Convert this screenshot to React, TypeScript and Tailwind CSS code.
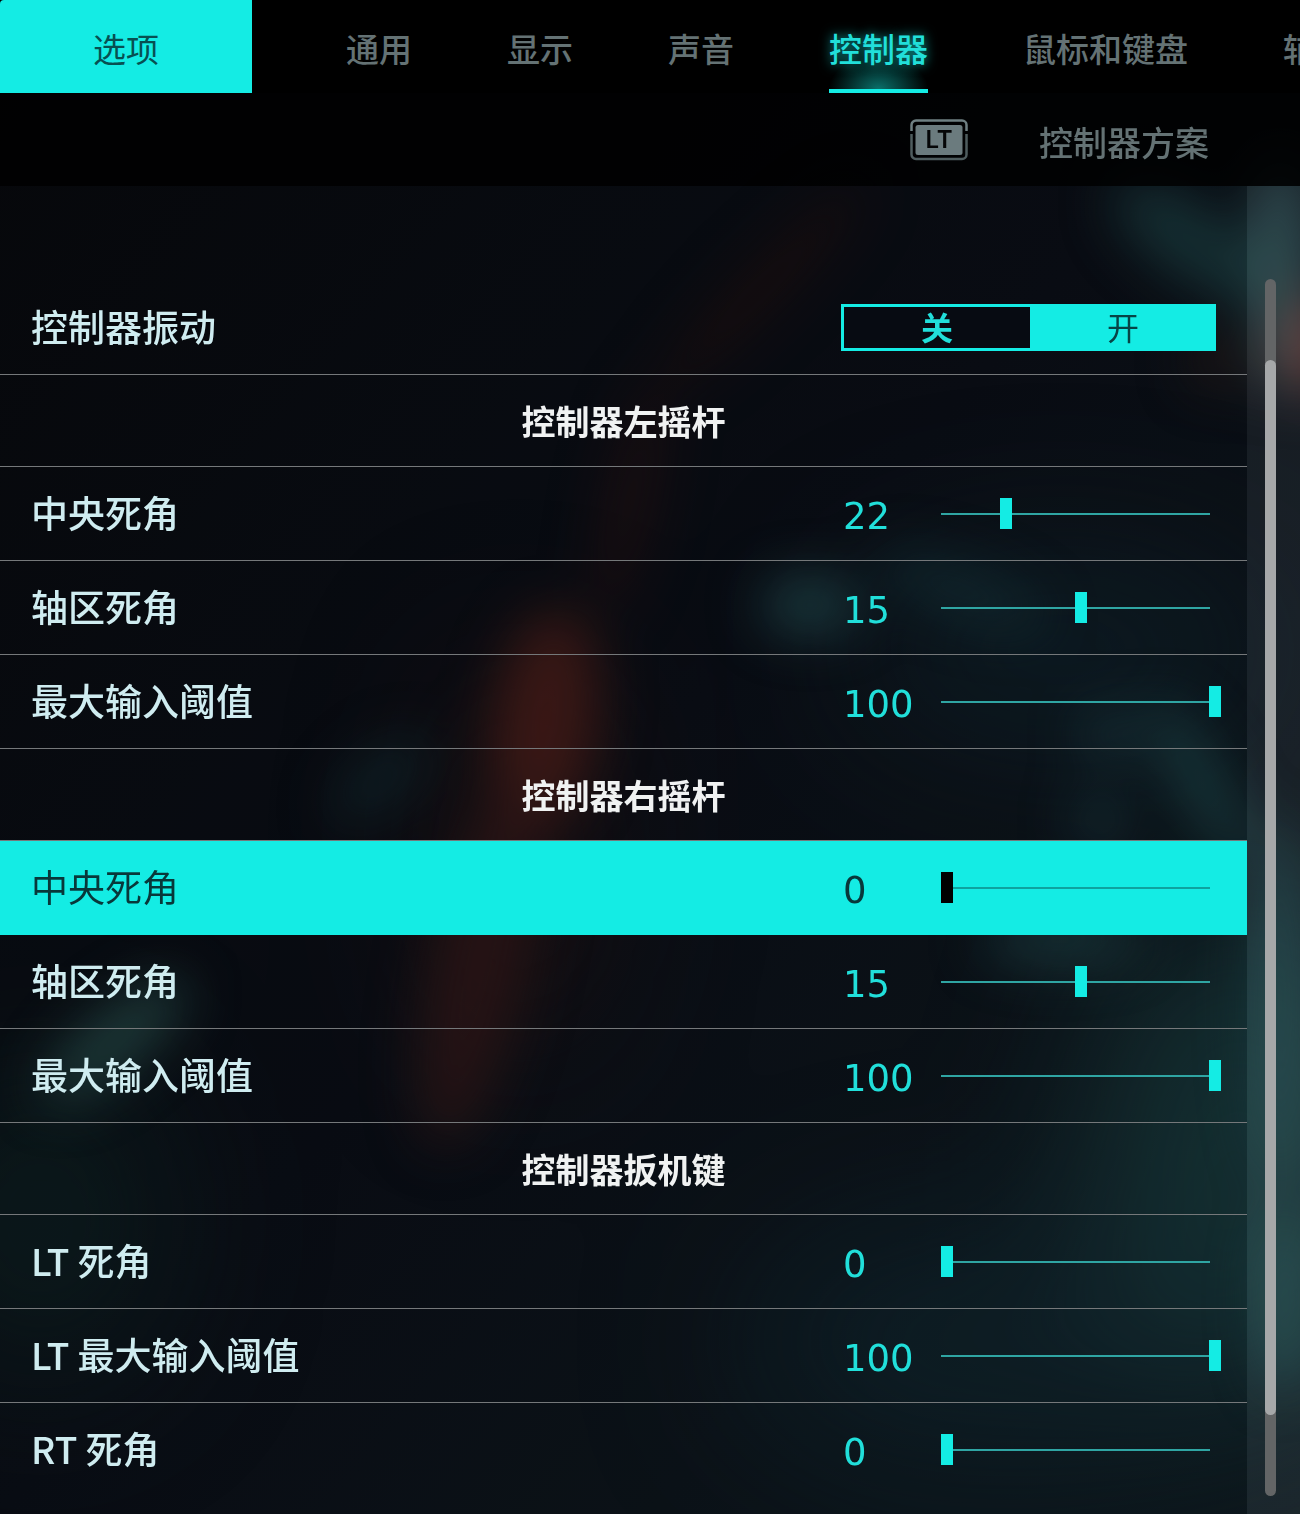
import { useState } from "react";
import clsx from "clsx";

type SliderRow = {
  kind: "slider";
  id: string;
  label: string;
  value: number;
  max: number;
};

type SectionRow = {
  kind: "section";
  id: string;
  label: string;
};

type Row = SliderRow | SectionRow;

const TABS = ["通用", "显示", "声音", "控制器", "鼠标和键盘", "辅助功能"];

const ROWS: Row[] = [
  { kind: "section", id: "left-stick", label: "控制器左摇杆" },
  { kind: "slider", id: "left-center", label: "中央死角", value: 22, max: 100 },
  { kind: "slider", id: "left-axial", label: "轴区死角", value: 15, max: 30 },
  { kind: "slider", id: "left-max", label: "最大输入阈值", value: 100, max: 100 },
  { kind: "section", id: "right-stick", label: "控制器右摇杆" },
  { kind: "slider", id: "right-center", label: "中央死角", value: 0, max: 100 },
  { kind: "slider", id: "right-axial", label: "轴区死角", value: 15, max: 30 },
  { kind: "slider", id: "right-max", label: "最大输入阈值", value: 100, max: 100 },
  { kind: "section", id: "triggers", label: "控制器扳机键" },
  { kind: "slider", id: "lt-dead", label: "LT 死角", value: 0, max: 100 },
  { kind: "slider", id: "lt-max", label: "LT 最大输入阈值", value: 100, max: 100 },
  { kind: "slider", id: "rt-dead", label: "RT 死角", value: 0, max: 100 },
];

// Out-of-focus scenery behind the menu
function Backdrop() {
  return (
    <svg
      className="absolute inset-0 -z-10 h-full w-full"
      viewBox="0 0 1300 1514"
      preserveAspectRatio="none"
      aria-hidden="true"
    >
      <defs>
        <filter id="soft" x="-200%" y="-200%" width="500%" height="500%" colorInterpolationFilters="sRGB">
          <feGaussianBlur stdDeviation="26" />
        </filter>
        <filter id="wide" x="-100%" y="-100%" width="300%" height="300%" colorInterpolationFilters="sRGB">
          <feGaussianBlur stdDeviation="80" />
        </filter>
        <linearGradient id="base" x1="0" y1="0" x2="1" y2="1">
          <stop offset="0" stopColor="#08090d" />
          <stop offset="0.5" stopColor="#0b0f17" />
          <stop offset="1" stopColor="#0f1b21" />
        </linearGradient>
      </defs>
      <rect width="1300" height="1514" fill="url(#base)" />
      <g filter="url(#wide)">
        <ellipse cx="1240" cy="1160" rx="150" ry="240" fill="#1c4446" opacity="0.7" />
        <ellipse cx="1060" cy="650" rx="210" ry="90" fill="#14303a" opacity="0.5" />
        <ellipse cx="40" cy="1220" rx="120" ry="160" fill="#10302e" opacity="0.5" />
        <ellipse cx="1000" cy="1340" rx="260" ry="120" fill="#14303a" opacity="0.5" />
        <ellipse cx="520" cy="860" rx="70" ry="200" fill="#2a1414" opacity="0.6" />
      </g>
      <g filter="url(#soft)">
        <ellipse cx="545" cy="720" rx="52" ry="110" fill="#4c1e1a" opacity="0.85" transform="rotate(8 545 720)" />
        <ellipse cx="480" cy="960" rx="48" ry="190" fill="#361a1a" opacity="0.75" transform="rotate(12 480 960)" />
        <ellipse cx="630" cy="500" rx="24" ry="120" fill="#2c1412" opacity="0.6" transform="rotate(12 630 500)" />
        <ellipse cx="760" cy="290" rx="24" ry="150" fill="#24130f" opacity="0.6" transform="rotate(45 760 290)" />
        <ellipse cx="115" cy="1040" rx="90" ry="28" fill="#2b5250" opacity="0.8" transform="rotate(-40 115 1040)" />
        <ellipse cx="380" cy="780" rx="60" ry="24" fill="#142e34" opacity="0.7" transform="rotate(-40 380 780)" />
        <ellipse cx="810" cy="605" rx="50" ry="28" fill="#245055" opacity="0.8" />
        <ellipse cx="960" cy="590" rx="90" ry="24" fill="#17363d" opacity="0.7" transform="rotate(20 960 590)" />
        <ellipse cx="1190" cy="240" rx="90" ry="36" fill="#1f484c" opacity="0.7" transform="rotate(35 1190 240)" />
        <ellipse cx="1220" cy="360" rx="30" ry="26" fill="#2a1a18" opacity="0.8" />
        <ellipse cx="1200" cy="780" rx="24" ry="90" fill="#215054" opacity="0.7" transform="rotate(-30 1200 780)" />
        <ellipse cx="1110" cy="735" rx="28" ry="26" fill="#1e4248" opacity="0.7" />
        <ellipse cx="1100" cy="820" rx="28" ry="24" fill="#1e4248" opacity="0.7" />
        <ellipse cx="1060" cy="940" rx="80" ry="22" fill="#245054" opacity="0.7" />
        <ellipse cx="1280" cy="270" rx="30" ry="120" fill="#2a5054" opacity="0.8" />
        <ellipse cx="1308" cy="345" rx="18" ry="50" fill="#8a3c34" opacity="0.9" />
        <ellipse cx="1280" cy="1000" rx="30" ry="180" fill="#1f4c52" opacity="0.6" />
        <ellipse cx="1285" cy="1300" rx="24" ry="90" fill="#225254" opacity="0.7" />
      </g>
    </svg>
  );
}

function TriggerIcon() {
  return (
    <svg width="58" height="42" viewBox="0 0 58 42" role="img" aria-label="LT">
      <path d="M1.5 12V6A4.5 4.5 0 0 1 6 1.5h46A4.5 4.5 0 0 1 56.500 6v6" fill="none" stroke="#6f8083" strokeWidth="2.500" />
      <path d="M1.500 15v20.500A4.500 4.500 0 0 0 6 40h46a4.500 4.500 0 0 0 4.500-4.500V15" fill="none" stroke="#4f5d5f" strokeWidth="2.500" />
      <rect x="5.500" y="6" width="47" height="30" rx="2.500" fill="#6b7b7e" />
      <text x="29" y="29" textAnchor="middle" fontSize="24" fontWeight="600" fontFamily="Inter, sans-serif" fill="#050607">
        LT
      </text>
    </svg>
  );
}

function SliderSetting({ row, selected, onSelect }: { row: SliderRow; selected: boolean; onSelect: () => void }) {
  const [value, setValue] = useState(row.value);

  return (
    <div
      onMouseDown={onSelect}
      className={clsx(
        "flex h-[94px] items-center border-b pr-[26px] pl-[31px] last:border-transparent",
        selected ? "border-[#14ece4] bg-[#14ece4]" : "border-[#75787a]"
      )}
    >
      <label
        htmlFor={row.id}
        className={clsx(
          "flex-1 pb-1 text-[37px] leading-[44px]",
          selected ? "font-normal text-[#08383a]" : "font-medium text-[#cfecf0]"
        )}
      >
        {row.label}
      </label>
      <output
        htmlFor={row.id}
        className={clsx(
          "w-[100px] pt-1.5 pl-0.5 font-['DejaVu_Sans',sans-serif] text-[37px] leading-[44px]",
          selected ? "text-[#08383a]" : "text-[#21dfda]"
        )}
      >
        {value}
      </output>
      <input
        id={row.id}
        type="range"
        min={0}
        max={row.max}
        value={value}
        onChange={(e) => setValue(Number(e.target.value))}
        className={clsx(
          "h-8 w-[280px] appearance-none bg-[length:269px_2px] bg-left bg-no-repeat outline-none",
          "[&::-webkit-slider-thumb]:h-[31px] [&::-webkit-slider-thumb]:w-3 [&::-webkit-slider-thumb]:appearance-none",
          selected
            ? "bg-[linear-gradient(#0ea39f,#0ea39f)] [&::-webkit-slider-thumb]:bg-black"
            : "bg-[linear-gradient(#2fa5a3,#2fa5a3)] [&::-webkit-slider-thumb]:bg-[#14ece4]"
        )}
      />
    </div>
  );
}

export default function App() {
  const [activeTab, setActiveTab] = useState("控制器");
  const [selected, setSelected] = useState("right-center");
  const [vibration, setVibration] = useState(true);

  return (
    <div className="relative isolate flex min-h-screen flex-col overflow-hidden bg-[#0a0c12] font-['Noto_Sans_CJK_SC',sans-serif]">
      <Backdrop />

      <header className="flex h-[93px] bg-black">
        <h1 className="flex w-[252px] shrink-0 items-center justify-center rounded-tl bg-[#14ece4] pt-1 text-[33px] text-[#075052]">
          选项
        </h1>
        <nav className="flex gap-[95px] overflow-hidden pl-[94px]">
          {TABS.map((tab) => (
            <button
              key={tab}
              type="button"
              onClick={() => setActiveTab(tab)}
              className={clsx(
                "shrink-0 border-b-4 pt-2 text-[33px] font-medium whitespace-nowrap",
                tab === activeTab
                  ? "border-[#14ece4] bg-[radial-gradient(50%_34px_at_bottom,#0a6f6a_0%,transparent_100%)] text-[#21dfda] [text-shadow:0_0_12px_#0fa7a2]"
                  : "border-transparent text-[#647274]"
              )}
            >
              {tab}
            </button>
          ))}
        </nav>
      </header>

      <div className="flex h-[93px] items-center justify-end gap-[71px] bg-black/85 pr-[91px]">
        <TriggerIcon />
        <button type="button" className="pt-1 text-[34px] font-medium text-[#647274]">
          控制器方案
        </button>
      </div>

      <div className="flex flex-1">
        <main className="flex-1 bg-black/15 pt-[95px] pb-4">
          <div className="flex h-[94px] items-center justify-between border-b border-[#75787a] pr-[31px] pl-[31px]">
            <span id="vibration" className="pb-1 text-[37px] leading-[44px] font-medium text-[#cfecf0]">
              控制器振动
            </span>
            <div
              role="group"
              aria-labelledby="vibration"
              className="flex h-[47px] w-[375px] border-3 border-r-0 border-[#14ece4] text-[32px] leading-[36px]"
            >
              {[false, true].map((on) => (
                <button
                  key={String(on)}
                  type="button"
                  aria-pressed={vibration === on}
                  onClick={() => setVibration(on)}
                  className={clsx(
                    "flex-1 pb-1",
                    vibration === on ? "bg-[#14ece4] text-[#064446]" : "bg-[#070b12] font-bold text-[#21dfda]"
                  )}
                >
                  {on ? "开" : "关"}
                </button>
              ))}
            </div>
          </div>

          {ROWS.map((row) =>
            row.kind === "section" ? (
              <h2
                key={row.id}
                className="flex h-[92px] items-center justify-center border-b border-[#75787a] text-[34px] font-bold text-[#f0f2f2]"
              >
                {row.label}
              </h2>
            ) : (
              <SliderSetting key={row.id} row={row} selected={selected === row.id} onSelect={() => setSelected(row.id)} />
            )
          )}
        </main>

        <aside className="flex w-[53px] justify-center bg-white/5 pt-[93px] pr-[7px] pb-[18px]">
          <div className="flex w-[11px] flex-col rounded-full bg-[#636566] pt-[81px] pb-[81px]">
            <div className="flex-1 rounded-full bg-[#a6a8a9]" />
          </div>
        </aside>
      </div>
    </div>
  );
}
